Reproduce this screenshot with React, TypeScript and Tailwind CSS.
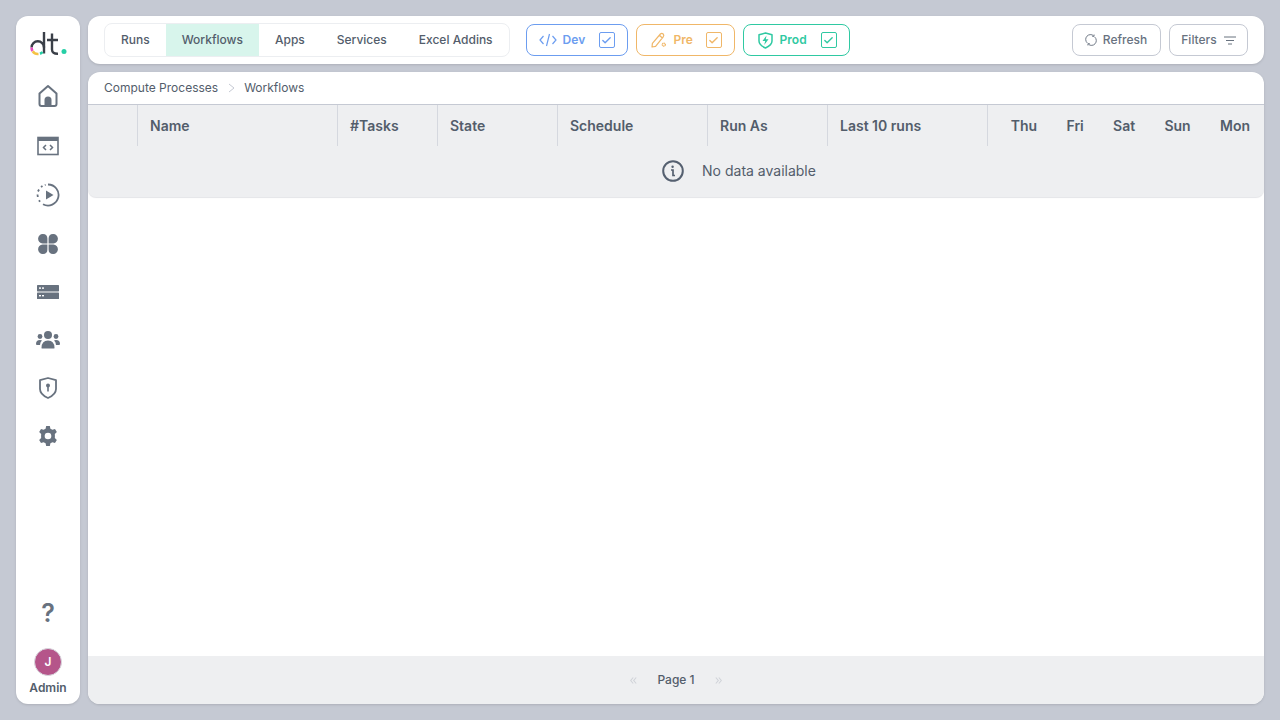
import { Check } from "lucide-react";

const tabs = ["Runs", "Workflows", "Apps", "Services", "Excel Addins"];

const columns = [
    { label: "", width: "w-[50px]" },
    { label: "Name", width: "w-[200px]" },
    { label: "#Tasks", width: "w-[100px]" },
    { label: "State", width: "w-[120px]" },
    { label: "Schedule", width: "w-[150px]" },
    { label: "Run As", width: "w-[120px]" },
    { label: "Last 10 runs", width: "w-[160px]" },
];

const days = ["Thu", "Fri", "Sat", "Sun", "Mon"];

const Logo = () => (
    <svg width="38" height="26" viewBox="0 0 38 26" fill="none">
        <path d="M15 17.5 A6.2 6.2 0 0 0 2.6 17.5" stroke="#3a3f48" strokeWidth="2.4" />
        <path d="M15 2 V23.5" stroke="#3a3f48" strokeWidth="2.4" />
        <path d="M2.6 17.5 A6.2 6.2 0 0 0 3.5 21" stroke="#e84cc0" strokeWidth="2.6" />
        <path d="M3.7 21.3 A6.2 6.2 0 0 0 9.5 24" stroke="#f5c244" strokeWidth="2.6" />
        <path d="M11 23.8 A6.2 6.2 0 0 0 13.5 22" stroke="#26cfa6" strokeWidth="2.6" />
        <path d="M23 3.5 V19.5 Q23 24 29 23.8 M18 10 H29" stroke="#3a3f48" strokeWidth="2.4" />
        <circle cx="35" cy="21.5" r="2.5" fill="#26cfa6" />
    </svg>
);

const HomeIcon = () => (
    <svg width="20" height="24" viewBox="0 0 20 24" fill="none">
        <path d="M1.5 9.5 L10 2 L18.5 9.5 V20 Q18.5 22 16.5 22 H3.5 Q1.5 22 1.5 20 Z" stroke="#68727f" strokeWidth="2" strokeLinejoin="round" />
        <path d="M6.5 22 V16 Q6.5 12.5 10 12.5 Q13.5 12.5 13.5 16 V22 Z" fill="#68727f" />
    </svg>
);

const CodeWindowIcon = () => (
    <svg width="22" height="20" viewBox="0 0 22 20" fill="none">
        <rect x="1" y="1.5" width="20" height="17" stroke="#68727f" strokeWidth="1.6" />
        <rect x="1" y="1" width="20" height="4" fill="#68727f" />
        <path d="M9 9 L6.5 11.5 L9 14 M13 9 L15.5 11.5 L13 14" stroke="#68727f" strokeWidth="1.5" />
    </svg>
);

const RunIcon = () => (
    <svg width="24" height="24" viewBox="0 0 24 24" fill="none">
        <path d="M12 1.5 A10.5 10.5 0 1 1 7 21.2" stroke="#68727f" strokeWidth="1.8" />
        <path d="M4 18.8 L3 17.2 M1.8 14 L1.5 11.5 M2 8.5 L3 6.5 M5 4 L6.5 3 M8.8 2 L9.6 1.8" stroke="#68727f" strokeWidth="1.8" />
        <path d="M10 7.5 L17.5 12 L10 16.5 Z" fill="#68727f" />
    </svg>
);

const AppsIcon = () => (
    <svg width="20" height="20" viewBox="0 0 20 20" fill="#68727f">
        <path d="M5 0 A4.6 4.6 0 0 1 9.4 4.6 V9.4 H4.6 A4.7 4.7 0 0 1 5 0 Z" />
        <path d="M15 0 A4.6 4.6 0 0 0 10.6 4.6 V9.4 H15.4 A4.7 4.7 0 0 0 15 0 Z" />
        <path d="M5 20 A4.6 4.6 0 0 0 9.4 15.4 V10.6 H4.6 A4.7 4.7 0 0 0 5 20 Z" />
        <path d="M15 20 A4.6 4.6 0 0 1 10.6 15.4 V10.6 H15.4 A4.7 4.7 0 0 1 15 20 Z" />
    </svg>
);

const ServerIcon = () => (
    <svg width="22" height="14" viewBox="0 0 22 14">
        <rect x="0" y="0" width="22" height="6.4" rx="0.6" fill="#68727f" />
        <rect x="0" y="7.6" width="22" height="6.4" rx="0.6" fill="#68727f" />
        <rect x="2" y="2.4" width="2" height="1.4" fill="#fff" />
        <rect x="5" y="2.4" width="2" height="1.4" fill="#fff" />
        <rect x="2" y="10" width="2" height="1.4" fill="#fff" />
        <rect x="5" y="10" width="2" height="1.4" fill="#fff" />
    </svg>
);

const UsersIcon = () => (
    <svg width="24" height="18" viewBox="0 0 24 18" fill="#68727f">
        <circle cx="12" cy="4" r="4" />
        <circle cx="4" cy="5.5" r="2.4" />
        <circle cx="20" cy="5.5" r="2.4" />
        <path d="M5.5 17 Q5.5 9.5 12 9.5 Q18.5 9.5 18.5 17 Q18.5 17.6 17.5 17.6 H6.5 Q5.5 17.6 5.5 17 Z" />
        <path d="M0 13 Q0 9 4 9 Q5.5 9 6 9.6 Q4.2 11 4 14 H1 Q0 14 0 13 Z" />
        <path d="M24 13 Q24 9 20 9 Q18.5 9 18 9.6 Q19.8 11 20 14 H23 Q24 14 24 13 Z" />
    </svg>
);

const ShieldIcon = () => (
    <svg width="18" height="22" viewBox="0 0 18 22" fill="none">
        <path d="M9 1 L17 3.2 V12 Q17 17.5 9 21 Q1 17.5 1 12 V3.2 Z" stroke="#68727f" strokeWidth="1.8" strokeLinejoin="round" />
        <circle cx="9" cy="8.6" r="2" fill="#68727f" />
        <rect x="8.2" y="9" width="1.6" height="5.5" fill="#68727f" />
    </svg>
);

const GearIcon = () => (
    <svg width="20" height="20" viewBox="0 0 24 24" fill="#68727f">
        <path fillRule="evenodd" d="M9.8 0 H14.2 L14.9 3.2 Q16.2 3.7 17.3 4.5 L20.4 3.5 L22.6 7.3 L20.2 9.5 Q20.4 12 20.2 14.5 L22.6 16.7 L20.4 20.5 L17.3 19.5 Q16.2 20.3 14.9 20.8 L14.2 24 H9.8 L9.1 20.8 Q7.8 20.3 6.7 19.5 L3.6 20.5 L1.4 16.7 L3.8 14.5 Q3.6 12 3.8 9.5 L1.4 7.3 L3.6 3.5 L6.7 4.5 Q7.8 3.7 9.1 3.2 Z M12 8 A4 4 0 1 0 12 16 A4 4 0 1 0 12 8 Z" />
    </svg>
);

const DevIcon = () => (
    <svg width="18" height="14" viewBox="0 0 18 14" fill="none" stroke="#6c9df0" strokeWidth="1.2">
        <path d="M4.5 3 L1 7 L4.5 11 M13.5 3 L17 7 L13.5 11 M10.5 1 L7.5 13" />
    </svg>
);

const PreIcon = () => (
    <svg width="16" height="16" viewBox="0 0 16 16" fill="none" stroke="#f0b768" strokeWidth="1.2">
        <path d="M1 15 L1.4 11.4 L9.4 2 Q10.8 0.8 12.2 2 Q13.4 3.4 12.2 4.8 L4.6 14.4 Z M8.4 3.2 L11.4 6" strokeLinejoin="round" />
        <circle cx="12.8" cy="12.6" r="1.5" strokeWidth="1.4" strokeDasharray="1.2 0.4" />
    </svg>
);

const ProdIcon = () => (
    <svg width="15" height="17" viewBox="0 0 15 17" fill="none">
        <path d="M7.5 1 L14 2.8 V9 Q14 13 7.5 16 Q1 13 1 9 V2.8 Z" stroke="#2fc9a2" strokeWidth="1.5" strokeLinejoin="round" />
        <path d="M8.5 3.5 L4.5 9 H7.2 L6.2 13 L10.5 7.2 H7.8 Z" fill="#2fc9a2" />
    </svg>
);

const RefreshIcon = () => (
    <svg width="12" height="12" viewBox="0 0 14 14" fill="none" stroke="#68727f" strokeWidth="1.1">
        <path d="M10 2 A5.6 5.6 0 0 0 2.6 10.4 M4 12 A5.6 5.6 0 0 0 11.4 3.6" />
        <path d="M10.6 0.6 V2.8 H8.4 M3.4 13.4 V11.2 H5.6" strokeWidth="1" />
    </svg>
);

const FilterIcon = () => (
    <svg width="12" height="9" viewBox="0 0 12 9" stroke="#68727f" strokeWidth="1">
        <path d="M0 1 H12 M2 4.5 H10 M4 8 H8" />
    </svg>
);

const InfoIcon = () => (
    <svg width="22" height="22" viewBox="0 0 22 22" fill="none" stroke="#556070" strokeWidth="2">
        <circle cx="11" cy="11" r="9.8" />
        <circle cx="10.6" cy="6.8" r="1.2" fill="#556070" stroke="none" />
        <path d="M9 10 H11 V15.5 H13" strokeWidth="1.7" />
    </svg>
);

const DoubleChevron = ({ flip }: { flip?: boolean }) => (
    <svg width="7" height="7" viewBox="0 0 7 7" fill="none" stroke="#d0d3d9" strokeWidth="1.1" className={flip ? "rotate-180" : ""}>
        <path d="M3.2 0.5 L0.7 3.5 L3.2 6.5 M6.2 0.5 L3.7 3.5 L6.2 6.5" />
    </svg>
);

const EnvChip = ({
    label,
    icon,
    classes,
    boxClass,
    color,
}: {
    label: string;
    icon: React.ReactNode;
    classes: string;
    boxClass: string;
    color: string;
}) => (
    <div className={`flex h-8 items-center rounded-lg border pr-[12px] text-xs font-semibold ${classes}`}>
        {icon}
        <span>{label}</span>
        <span className={`ml-auto flex h-4 w-4 items-center justify-center rounded-[2px] border ${boxClass}`}>
            <Check size={11} color={color} strokeWidth={3} />
        </span>
    </div>
);

export default function App() {
    return (
        <div
            className="flex h-screen gap-2 overflow-hidden bg-[#c5c9d3] p-4 pl-4 text-[#535d6b]"
            style={{ fontFamily: "Inter, 'Liberation Sans', sans-serif" }}
        >
            {/* sidebar */}
            <aside className="flex w-16 shrink-0 flex-col items-center rounded-xl bg-white shadow-sm">
                <div className="mt-[14px] flex h-[26px] items-center justify-center">
                    <Logo />
                </div>
                <nav className="mt-4 flex flex-col items-center">
                    <div className="flex h-[48px] items-center"><HomeIcon /></div>
                    <div className="flex h-[51px] items-center"><CodeWindowIcon /></div>
                    <div className="flex h-[48px] items-center"><RunIcon /></div>
                    <div className="flex h-[49px] items-center"><AppsIcon /></div>
                    <div className="flex h-[47px] items-center"><ServerIcon /></div>
                    <div className="flex h-[49px] items-center"><UsersIcon /></div>
                    <div className="flex h-[47px] items-center"><ShieldIcon /></div>
                    <div className="flex h-[49px] items-center"><GearIcon /></div>
                </nav>
                <div className="mt-auto flex flex-col items-center pb-[7px]">
                    <span className="text-[25px] font-semibold leading-none text-[#68727f]">?</span>
                    <div className="mt-[22px] flex h-7 w-7 items-center justify-center rounded-full border border-[#d8d8de] bg-[#b5558a] text-xs font-semibold text-white">
                        J
                    </div>
                    <span className="mt-[3px] text-xs font-semibold leading-[18px]">Admin</span>
                </div>
            </aside>

            <div className="flex min-w-0 flex-1 flex-col gap-2">
                {/* top bar */}
                <header className="flex h-12 shrink-0 items-center rounded-xl bg-white pl-4 pr-4 shadow-sm">
                    <div className="flex h-[34px] overflow-hidden rounded-lg border border-[#eceef1] text-xs font-medium">
                        {tabs.map((tab) => (
                            <div
                                key={tab}
                                className={`flex items-center px-4 ${tab === "Workflows" ? "bg-[#d8f5ec]" : ""}`}
                            >
                                {tab}
                            </div>
                        ))}
                    </div>
                    <div className="ml-4 flex gap-2">
                        <EnvChip
                            label="Dev"
                            icon={<span className="ml-3 mr-[6px] flex"><DevIcon /></span>}
                            classes="w-[102px] border-[#6c9df0] text-[#6c9df0]"
                            boxClass="border-[#6c9df0]"
                            color="#6c9df0"
                        />
                        <EnvChip
                            label="Pre"
                            icon={<span className="ml-[14px] mr-[7px] flex"><PreIcon /></span>}
                            classes="w-[99px] border-[#f0b768] text-[#f0b768]"
                            boxClass="border-[#f0b768]"
                            color="#f0b768"
                        />
                        <EnvChip
                            label="Prod"
                            icon={<span className="ml-[14px] mr-[7px] flex"><ProdIcon /></span>}
                            classes="w-[107px] border-[#2fc9a2] text-[#2fc9a2]"
                            boxClass="border-[#2fc9a2]"
                            color="#2fc9a2"
                        />
                    </div>
                    <div className="ml-auto flex gap-2 text-xs font-medium text-[#68727f]">
                        <button className="flex h-8 w-[89px] items-center justify-center gap-[6px] rounded-lg border border-[#c5c9d3] pr-[1px]">
                            <RefreshIcon />
                            Refresh
                        </button>
                        <button className="flex h-8 w-[79px] items-center justify-center gap-[7px] rounded-lg border border-[#c5c9d3]">
                            Filters
                            <FilterIcon />
                        </button>
                    </div>
                </header>

                {/* content */}
                <main className="flex min-h-0 flex-1 flex-col overflow-hidden rounded-xl bg-white shadow-sm">
                    <div className="flex h-[33px] shrink-0 items-center gap-[9.5px] border-b border-[#c5c9d3] px-4 text-xs">
                        <span>Compute Processes</span>
                        <svg width="7" height="10" viewBox="0 0 7 10" fill="none" stroke="#c5c9d3">
                            <path d="M1 1 L6 5 L1 9" />
                        </svg>
                        <span>Workflows</span>
                    </div>
                    <section className="rounded-b-lg bg-[#eeeff1] shadow-[0_1px_1px_#e4e5e8]">
                        <div className="flex h-[41px] items-stretch text-sm font-semibold">
                            {columns.map((col, index) => (
                                <div
                                    key={index}
                                    className={`flex shrink-0 items-center border-r border-[#d5d8df] pl-3 ${col.width}`}
                                >
                                    {col.label}
                                </div>
                            ))}
                            <div className="flex flex-1 items-center justify-end gap-[29.3px] pr-[14px]">
                                {days.map((day) => (
                                    <span key={day}>{day}</span>
                                ))}
                            </div>
                        </div>
                        <div className="flex h-[51px] items-center justify-center gap-[18px] pb-[2px] pl-[126px] text-sm">
                            <InfoIcon />
                            <span>No data available</span>
                        </div>
                    </section>
                    <div className="flex-1" />
                    <footer className="flex h-12 shrink-0 items-center justify-center gap-[20px] bg-[#eeeff1] text-xs font-medium">
                        <DoubleChevron />
                        <span>Page 1</span>
                        <DoubleChevron flip />
                    </footer>
                </main>
            </div>
        </div>
    );
}
